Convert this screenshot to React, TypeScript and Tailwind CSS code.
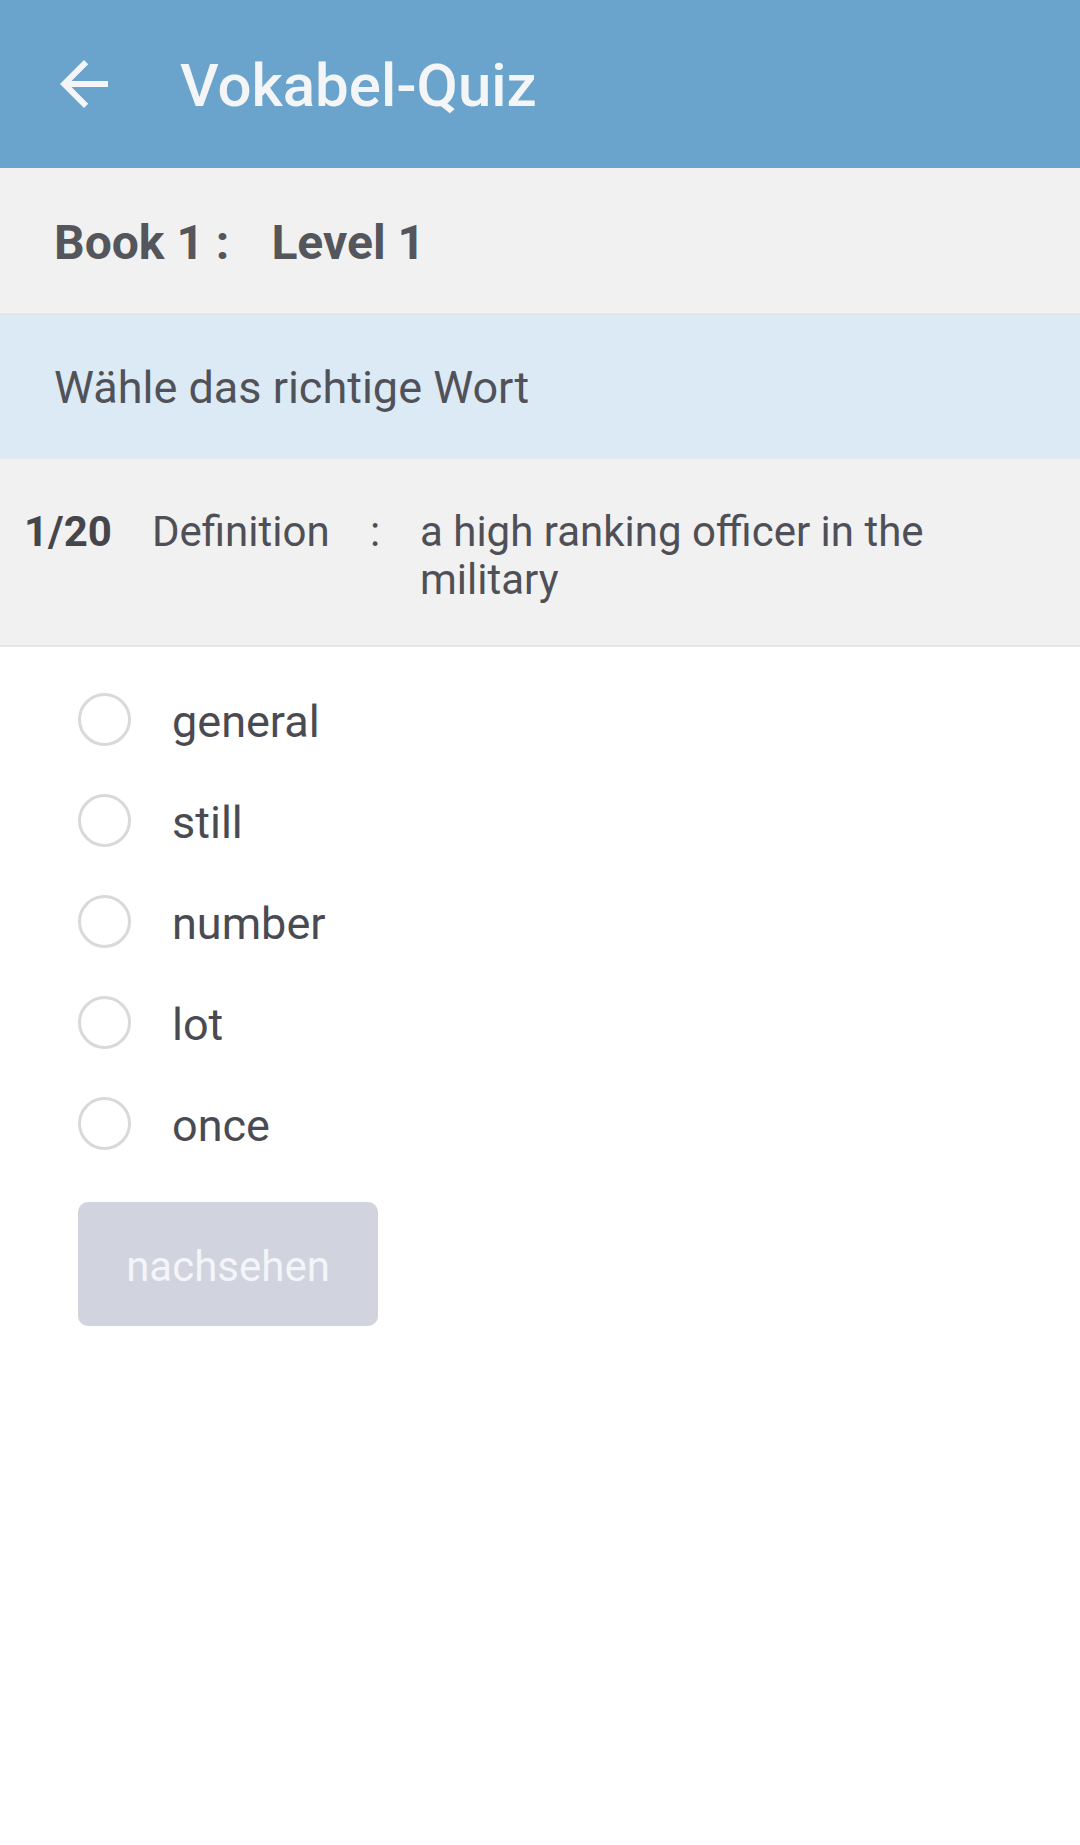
const options = ["general", "still", "number", "lot", "once"];

const BackArrow = () => (
  <svg width="72" height="72" viewBox="0 0 24 24" fill="#f4f5f7">
    <path d="M20 11H7.83l5.59-5.59L12 4l-8 8 8 8 1.41-1.41L7.83 13H20v-2z" />
  </svg>
);

const App = () => {
  return (
    <div className="min-h-[1845px] w-[1080px] bg-white font-['Roboto',sans-serif]">
      {/* top bar */}
      <header className="h-[168px] flex items-center pl-12 bg-[#6aa3cb]">
        <BackArrow />
        <h1 className="ml-[60px] mt-1 text-[60px] font-medium text-[#f4f5f7] leading-none">
          Vokabel-Quiz
        </h1>
      </header>

      <div className="h-[147px] flex items-center pt-1 pl-[54px] bg-[#f1f1f1] border-b-2 border-[#e5e5e5] text-[48px] font-bold text-[#55565c]">
        <span>Book 1 :</span>
        <span className="ml-[42px]">Level 1</span>
      </div>

      <div className="h-[144px] flex items-center pt-1 pl-[54px] bg-[#dceaf6] border-b-2 border-[#e6eaee]">
        <span className="text-[45px] text-[#515259]">Wähle das richtige Wort</span>
      </div>

      <div className="h-[188px] flex items-center pt-[7px] pl-[24px] pr-[60px] bg-[#f1f1f1] border-b-2 border-[#e6e6e6] text-[42px] leading-[48px] text-[#4f5057]">
        <div className="flex items-start w-full">
          <span className="w-[128px] shrink-0 font-bold text-[#45464c]">1/20</span>
          <span className="w-[218px] shrink-0">Definition</span>
          <span className="w-[50px] shrink-0">:</span>
          <span className="flex-1">a high ranking officer in the military</span>
        </div>
      </div>

      <div className="flex flex-col pl-[78px] pt-[22px]">
        {options.map((opt) => (
          <label key={opt} className="h-[101px] flex items-center cursor-pointer">
            <span className="w-[53px] h-[53px] shrink-0 rounded-full border-[3px] border-[#d9d9d9] bg-white" />
            <span className="ml-[41px] mt-1 text-[45px] text-[#4a4b52]">{opt}</span>
          </label>
        ))}

        <button
          disabled
          className="mt-[28px] w-[300px] h-[124px] pt-1 rounded-[10px] bg-[#d1d3de] text-[42px] text-[#f4f5f8]"
        >
          nachsehen
        </button>
      </div>
    </div>
  );
};

export default App;
